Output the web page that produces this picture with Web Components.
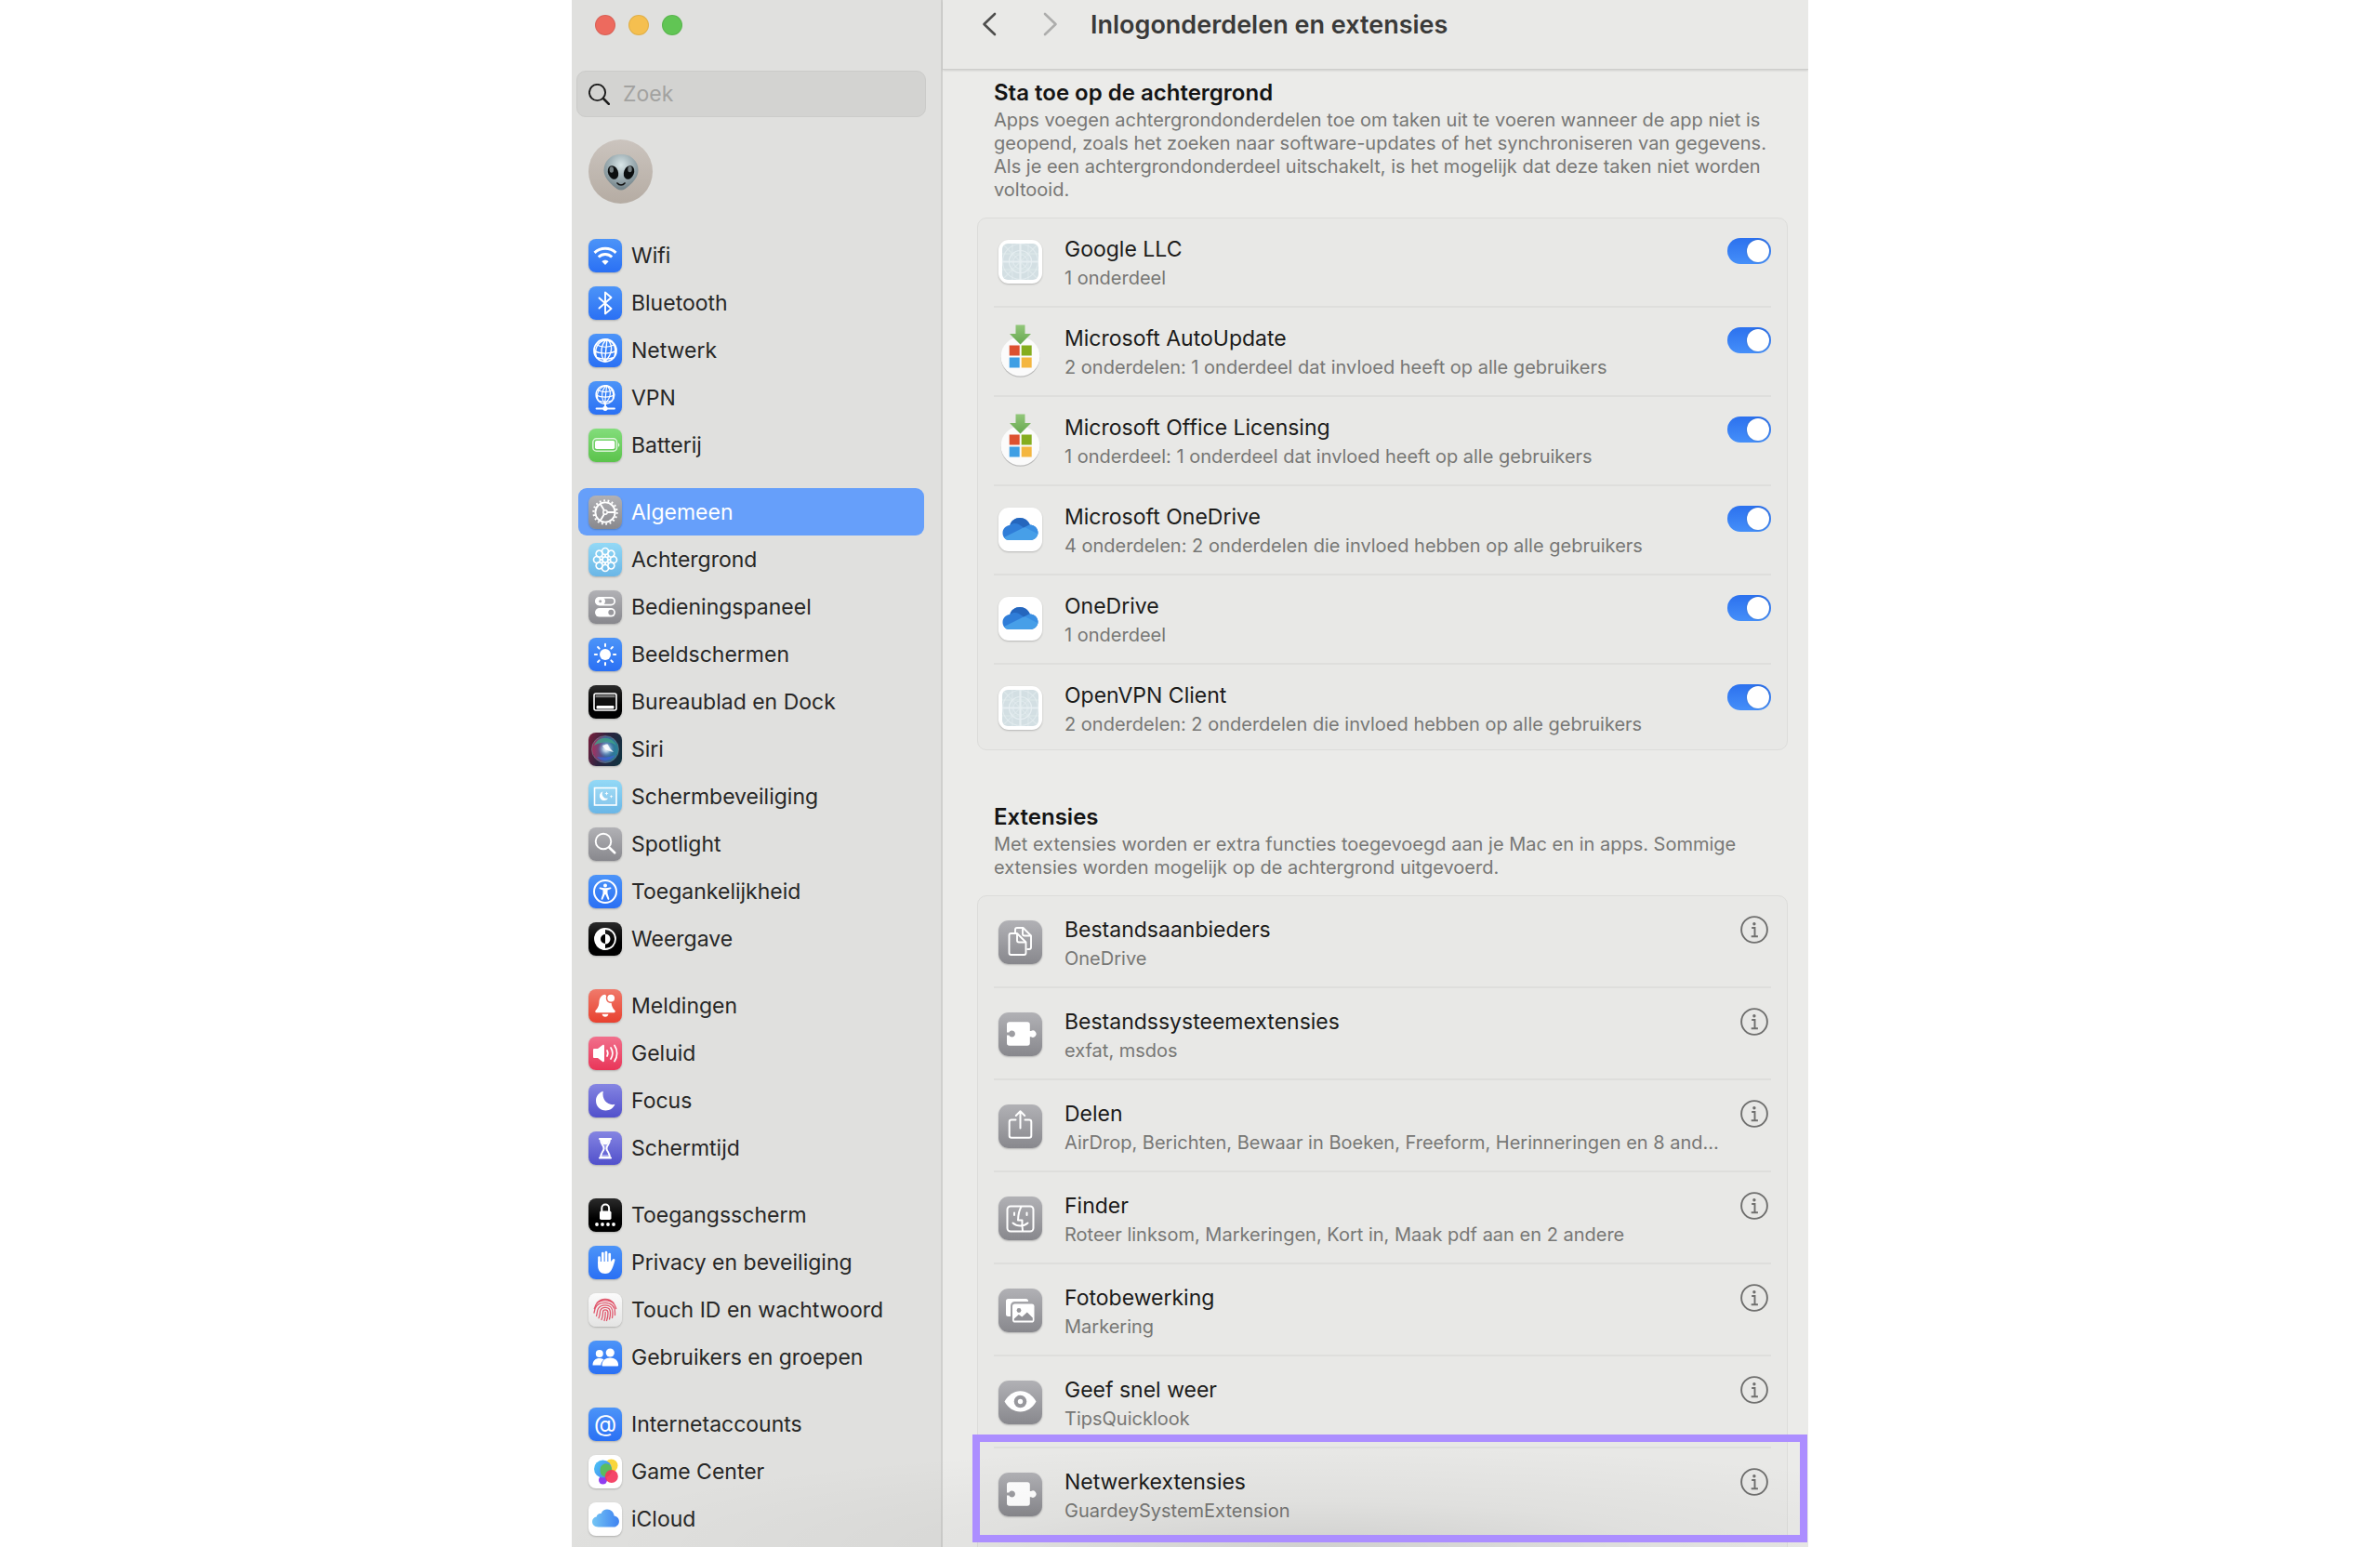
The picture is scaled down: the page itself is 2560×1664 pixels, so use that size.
<!DOCTYPE html>
<html lang="nl">
<head>
<meta charset="utf-8">
<title>Inlogonderdelen en extensies</title>
<style>
  html, body { margin: 0; height: 100%; background: #fff; }
  body { font-family: Inter, "Liberation Sans", sans-serif; color: #272726; -webkit-font-smoothing: antialiased; }
</style>
</head>
<body>
<settings-window>
  <settings-sidebar slot="sidebar">
    <sidebar-group>
      <sidebar-item icon="wifi">Wifi</sidebar-item>
      <sidebar-item icon="bluetooth">Bluetooth</sidebar-item>
      <sidebar-item icon="network">Netwerk</sidebar-item>
      <sidebar-item icon="vpn">VPN</sidebar-item>
      <sidebar-item icon="battery">Batterij</sidebar-item>
    </sidebar-group>
    <sidebar-group>
      <sidebar-item icon="gear" selected>Algemeen</sidebar-item>
      <sidebar-item icon="wallpaper">Achtergrond</sidebar-item>
      <sidebar-item icon="controls">Bedieningspaneel</sidebar-item>
      <sidebar-item icon="displays">Beeldschermen</sidebar-item>
      <sidebar-item icon="dock">Bureaublad en Dock</sidebar-item>
      <sidebar-item icon="siri">Siri</sidebar-item>
      <sidebar-item icon="saver">Schermbeveiliging</sidebar-item>
      <sidebar-item icon="spotlight">Spotlight</sidebar-item>
      <sidebar-item icon="access">Toegankelijkheid</sidebar-item>
      <sidebar-item icon="appearance">Weergave</sidebar-item>
    </sidebar-group>
    <sidebar-group>
      <sidebar-item icon="bell">Meldingen</sidebar-item>
      <sidebar-item icon="sound">Geluid</sidebar-item>
      <sidebar-item icon="focus">Focus</sidebar-item>
      <sidebar-item icon="screentime">Schermtijd</sidebar-item>
    </sidebar-group>
    <sidebar-group>
      <sidebar-item icon="lock">Toegangsscherm</sidebar-item>
      <sidebar-item icon="privacy">Privacy en beveiliging</sidebar-item>
      <sidebar-item icon="touchid">Touch ID en wachtwoord</sidebar-item>
      <sidebar-item icon="users">Gebruikers en groepen</sidebar-item>
    </sidebar-group>
    <sidebar-group>
      <sidebar-item icon="internet">Internetaccounts</sidebar-item>
      <sidebar-item icon="gamecenter">Game Center</sidebar-item>
      <sidebar-item icon="icloud">iCloud</sidebar-item>
    </sidebar-group>
  </settings-sidebar>

  <title-bar slot="titlebar">Inlogonderdelen en extensies</title-bar>

  <settings-section>
    <span slot="title">Sta toe op de achtergrond</span>
    <span slot="text">Apps voegen achtergrondonderdelen toe om taken uit te voeren wanneer de app niet is geopend, zoals het zoeken naar software-updates of het synchroniseren van gegevens. Als je een achtergrondonderdeel uitschakelt, is het mogelijk dat deze taken niet worden voltooid.</span>
    <settings-row icon="generic" kind="toggle" label="Google LLC" detail="1 onderdeel"></settings-row>
    <settings-row icon="msupdate" kind="toggle" label="Microsoft AutoUpdate" detail="2 onderdelen: 1 onderdeel dat invloed heeft op alle gebruikers"></settings-row>
    <settings-row icon="msupdate" kind="toggle" label="Microsoft Office Licensing" detail="1 onderdeel: 1 onderdeel dat invloed heeft op alle gebruikers"></settings-row>
    <settings-row icon="onedrive" kind="toggle" label="Microsoft OneDrive" detail="4 onderdelen: 2 onderdelen die invloed hebben op alle gebruikers"></settings-row>
    <settings-row icon="onedrive" kind="toggle" label="OneDrive" detail="1 onderdeel"></settings-row>
    <settings-row icon="generic" kind="toggle" label="OpenVPN Client" detail="2 onderdelen: 2 onderdelen die invloed hebben op alle gebruikers"></settings-row>
  </settings-section>

  <settings-section>
    <span slot="title">Extensies</span>
    <span slot="text">Met extensies worden er extra functies toegevoegd aan je Mac en in apps. Sommige extensies worden mogelijk op de achtergrond uitgevoerd.</span>
    <settings-row icon="files" kind="info" label="Bestandsaanbieders" detail="OneDrive"></settings-row>
    <settings-row icon="puzzle" kind="info" label="Bestandssysteemextensies" detail="exfat, msdos"></settings-row>
    <settings-row icon="share" kind="info" label="Delen" detail="AirDrop, Berichten, Bewaar in Boeken, Freeform, Herinneringen en 8 and…"></settings-row>
    <settings-row icon="finder" kind="info" label="Finder" detail="Roteer linksom, Markeringen, Kort in, Maak pdf aan en 2 andere"></settings-row>
    <settings-row icon="photos" kind="info" label="Fotobewerking" detail="Markering"></settings-row>
    <settings-row icon="eye" kind="info" label="Geef snel weer" detail="TipsQuicklook"></settings-row>
    <settings-row icon="puzzle" kind="info" label="Netwerkextensies" detail="GuardeySystemExtension" highlighted></settings-row>
  </settings-section>
</settings-window>

<script>
const BLUE = 'linear-gradient(#4c94f8,#2a70f4)';
const GRAY = 'linear-gradient(#b1b1b5,#88888d)';
const SKY = 'linear-gradient(#93d9f6,#6ab6e6)';
const BLACK = 'linear-gradient(#2b2b2b,#000 60%)';
const PURPLE = 'linear-gradient(#8585e2,#5150cb)';
const s = (w, d, extra = '') => `<path d="${d}" fill="none" stroke="#fff" stroke-width="${w}" stroke-linecap="round" stroke-linejoin="round" ${extra}/>`;
const f = (d, c = '#fff') => `<path d="${d}" fill="${c}"/>`;
const around = (n, shape) => Array.from({ length: n }, (_, i) => `<g transform="rotate(${i * 360 / n} 18 18)">${shape}</g>`).join('');

const globe = `<g fill="none" stroke="#fff"><circle cx="18" cy="18" r="12" stroke-width="1.8"/>
  <g stroke-width="1.4"><path d="M20 6C13 11 12 22 17.5 30M20 6c-1 8-1.500 16-2.500 24M20 6c6 5 7 15-2.500 24M20 6C9 8 6 17 8.500 25M20 6c8 3 10 10 8 18"/>
  <path d="M8 11.500c6 3.500 14 3.500 20.500 0M6 18.500c7 3.500 17 3.500 24 0M8.500 25.500c6 2 13 2 19 0"/></g></g>`;

const cloudPath = 'M10.500 26.500C6.500 26.500 4 24 4 20.800c0-2.800 2-4.800 4.600-5.200.4-2.600 2.600-4 5-3.600C15 8.500 17.300 7.500 20 7.500c4.200 0 7.200 3 7.600 7 3.200.4 5.300 2.900 5.300 5.900 0 3.500-2.600 6.100-6.200 6.100z';

const puzzle = `<path d="M9 13A2.800 2.800 0 0 1 11.800 10.200H31a2.800 2.800 0 0 1 2.800 2.800V19.900H35a3.700 3.700 0 1 1 0 6.400H33.800V33a2.800 2.800 0 0 1-2.800 2.800H11.800A2.800 2.800 0 0 1 9 33V24.400h2.300a3.500 3.500 0 1 0 0-3H9z" fill="#fff"/>`;

/* name: [background, svg markup, viewBox size] */
const ICONS = {
  wifi: [BLUE, s(3, 'M6.500 14.800C13 8.800 23 8.800 29.500 14.800', 'style="stroke-linecap:butt"') + s(3, 'M10.800 19.500c4.200-4 10.200-4 14.400 0', 'style="stroke-linecap:butt"') + f('M18 28l-3.600-3.800c1.900-2 5.300-2 7.200 0z')],
  bluetooth: [BLUE, s(1.9, 'M11.500 12.500L24.500 24 18 29.500v-23L24.500 12l-13 11.500')],
  network: [BLUE, globe],
  vpn: [BLUE, `<g transform="translate(3.200 -.2) scale(.82)">${globe}</g>` + s(1.800, 'M8.500 29.500H28M18 25v4') + '<circle cx="18" cy="29.300" r="2.600" fill="#fff"/>'],
  battery: ['linear-gradient(#83dd7b,#5bc34b)', '<rect x="4.800" y="10.800" width="25.700" height="13.400" rx="3.800" fill="none" stroke="#fff" stroke-opacity=".75" stroke-width="1.500"/><rect x="7" y="13" width="21.300" height="9" rx="1.800" fill="#fff"/><path d="M32 15.200c1.800.8 1.800 3.800 0 4.600z" fill="#fff" fill-opacity=".8"/>'],
  gear: [GRAY, '<g fill="none" stroke="#fff"><circle cx="18" cy="18" r="10.600" stroke-width="1.900"/><circle cx="18" cy="18" r="12.600" stroke-width="2.200" stroke-dasharray="1.800 2.598"/><circle cx="18" cy="18" r="2.200" stroke-width="1.500"/><path d="M20.200 18H28.500M16.900 16L12.700 8.900M16.900 20L12.700 27.100" stroke-width="1.900"/></g>'],
  wallpaper: [SKY, around(8, '<circle cx="18" cy="9" r="3.500" fill="none" stroke="#fff" stroke-width="1.700"/><path d="M18 12.500V15" stroke="#fff" stroke-width="1.800"/>') + '<circle cx="18" cy="18" r="3" fill="none" stroke="#fff" stroke-width="1.700"/>'],
  controls: [GRAY, '<rect x="7.800" y="7.800" width="20.400" height="7.800" rx="3.900" fill="none" stroke="#fff" stroke-width="1.700"/><rect x="7.500" y="7.500" width="10.500" height="8.400" rx="4.200" fill="#fff"/><circle cx="12.700" cy="11.700" r="1.500" fill="#a6a6aa"/><rect x="7" y="19" width="22" height="9.600" rx="4.800" fill="#fff"/><circle cx="24.300" cy="23.800" r="3" fill="#98989d"/>'],
  displays: [BLUE, '<circle cx="18" cy="18" r="6" fill="#fff"/>' + around(8, '<path d="M18 9V6.800" stroke="#fff" stroke-width="2" stroke-linecap="round"/>')],
  dock: [BLACK, '<rect x="6" y="9" width="24" height="18" rx="2" fill="none" stroke="#fff" stroke-width="1.600"/><rect x="7.500" y="10.500" width="21" height="3" fill="#777"/><rect x="7.500" y="13.500" width="21" height="8" fill="#111"/><rect x="8.500" y="22" width="19" height="3.500" rx="1" fill="#fff"/>'],
  siri: ['linear-gradient(110deg,#7d1f3c,#2c2340 45%,#0d3440)', '<defs><radialGradient id="sg"><stop offset="0" stop-color="#fff"/><stop offset=".35" stop-color="#cfe6f5" stop-opacity=".8"/><stop offset="1" stop-color="#4b8fd0" stop-opacity="0"/></radialGradient><linearGradient id="sl" x1="0" x2="1"><stop offset="0" stop-color="#d2346a"/><stop offset=".5" stop-color="#4d7fc4"/><stop offset="1" stop-color="#2fb2c8"/></linearGradient></defs><circle cx="18" cy="18" r="14" fill="url(#sl)" opacity=".65"/><path d="M6 14C10 3 25 3 30 14c-6-5-18-4-24 0z" fill="#3fa887" opacity=".75"/><path d="M9 26c5 6 15 5 20-2-7 3-14 3-20 2z" fill="#3b63d6" opacity=".8"/><circle cx="19" cy="17.500" r="9" fill="url(#sg)"/><path d="M15 14c3-1 5-2 6-1 1 3 4 6 6 8-5-1-10-3-12-7z" fill="#fff" opacity=".85"/><circle cx="18" cy="18" r="14.500" fill="none" stroke="#a6c5d0" stroke-width=".8" opacity=".5"/>'],
  saver: [SKY, '<rect x="6.500" y="8.500" width="23.500" height="18.500" fill="#fff" fill-opacity=".15" stroke="#fff" stroke-width="1.600"/>' + f('M15.500 12.300a5 5 0 1 0 5.800 7.200 4.900 4.900 0 0 1-5.800-7.200z') + f('M19.500 12.300l.6 1.600 1.600.6-1.600.6-.6 1.600-.6-1.600-1.600-.6 1.600-.6zM24.500 15.800l.5 1.500 1.500.5-1.500.5-.5 1.500-.5-1.500-1.500-.5 1.500-.5z')],
  spotlight: [GRAY, s(1.9, 'M22.200 21.500l6 5.800', 'style="stroke-width:2.600"') + '<circle cx="16" cy="15" r="8.300" fill="none" stroke="#fff" stroke-width="1.900"/>'],
  access: [BLUE, '<circle cx="18" cy="18" r="12" fill="none" stroke="#fff" stroke-width="2"/><circle cx="18" cy="11.600" r="2" fill="#fff"/>' + f('M11.500 14.300c0-.7.6-1 1.200-.8 3.500 1 7.100 1 10.600 0 .6-.2 1.200.1 1.200.8 0 .5-.3.8-.8 1l-3.200 1.100v3.600l1.800 5.600c.4 1.300-1.200 1.700-1.700.6L18.300 21h-.6l-2.300 5.200c-.5 1.100-2.100.7-1.700-.6l1.800-5.600v-3.600l-3.200-1.100c-.5-.2-.8-.5-.8-1z')],
  appearance: [BLACK, '<circle cx="18" cy="18" r="11" fill="none" stroke="#fff" stroke-width="1.800"/>' + f('M18 6.500a11.500 11.500 0 0 0 0 23z') + f('M18 12.500a5.500 5.500 0 0 1 0 11z') + f('M18 13a5 5 0 0 0 0 10z', '#000')],
  bell: ['linear-gradient(#f07a6b,#e8412f)', f('M18 5.800c-4.500.4-6.300 4-6.600 8.500-.3 4.500-1.700 6.300-3.700 8.500-.8.900-.5 2.400.8 2.400h19c1.300 0 1.600-1.500.8-2.400-2-2.200-3.400-4-3.700-8.500z') + '<circle cx="24.200" cy="9.600" r="5.400" fill="#ee6858"/><circle cx="24.200" cy="9.600" r="3.900" fill="#fff"/>' + f('M14.500 26.800h7c-.5 1.900-1.700 3-3.500 3s-3-1.100-3.500-3z')],
  sound: ['linear-gradient(#f1708c,#e93558)', f('M5 14.300c0-.8.5-1.300 1.300-1.300H10l5.200-3.900c.8-.6 1.800-.2 1.800.8v16.200c0 1-1 1.400-1.800.8L10 23H6.300C5.500 23 5 22.500 5 21.700z') + s(1.7, 'M20 15c1 1.800 1 4.200 0 6M24 12c2.200 3.500 2.200 8.500 0 12M28 9.500c3.500 5 3.500 12 0 17')],
  focus: [PURPLE, f('M15.800 7.800C11.800 9 8 12.800 8 17.900c0 6 4.600 10.500 10.500 10.500 4.500 0 8.300-2.400 10-6.700-6.500 2.200-14.800-4-12.700-13.900z')],
  screentime: [PURPLE, s(2.2, 'M12 8h12M12 28.500h12') + '<path d="M13 8.500c0 5 3.500 6.500 3.500 9.700S13 23 13 28h10c0-5-3.500-6.600-3.500-9.800S23 13.500 23 8.500z" fill="#a3a3ec" stroke="#fff" stroke-width="1.900"/>' + f('M14 9h8c0 3-1.500 4-2 5h-4c-.5-1-2-2-2-5z') + f('M18 18.500c.3 2.500 2.800 4 3.200 6.500h-6.400c.4-2.500 2.900-4 3.200-6.500z', '#6a69d6')],
  lock: [BLACK, '<rect x="12" y="13.500" width="12.500" height="9.500" rx="1.800" fill="#fff"/>' + s(2, 'M14.300 14v-3.500a3.900 3.900 0 0 1 7.800 0V14') + [9, 15, 21, 27].map(x => `<circle cx="${x}" cy="28" r="1.900" fill="#fff"/>`).join('')],
  privacy: [BLUE, s(2.7, 'M11.500 12.500V19M15.300 8v10M19 7v10M22.700 9v10') + f('M10.100 17h14l1.800-2.300c.8-1.500 3-.7 2.500 1-1.200 4.500-2.300 8-4 10.700-1.500 2.300-3.500 3.600-6.400 3.600-4.900 0-7.900-3.500-7.900-8.500z')],
  touchid: ['linear-gradient(#fbfbfb,#e4e4e3)', '<g fill="none" stroke="#e0566b" stroke-width="1.300" stroke-linecap="round"><path d="M9 10.500c5-5.500 13-5.500 18 0M6.300 16.500C7.500 10 12 7.800 18 7.800s10.500 3 11.700 8.700M6 21c.5-2 .8-3.500 1.300-5C8.800 12 13 10.300 18 10.300c6 0 10.500 3.700 10.500 10.200v3M8.500 24.500c1-3 .5-5.500 2-8 1.500-2.500 4-3.700 7.500-3.700 4.800 0 8 3.200 8 8 0 2.500 0 4-.5 5.700M11 26.700c2-4 .7-6 2-8.700.8-1.700 2.500-2.700 5-2.700 3.500 0 5.500 2.200 5.500 5.700 0 2.700-.3 4.800-1 7M14 28.500c1.500-3 1.500-6 1.500-8 0-1.700 1-2.700 2.500-2.700 2 0 3 1.300 3 3.200 0 3-.5 6-1.500 8.500M18.200 20.500c0 3 0 6-1.200 9"/></g>'],
  users: [BLUE, '<circle cx="11.800" cy="14" r="4" fill="#fff"/>' + f('M4.500 26.500c0-5 3-7.500 7.300-7.500 2 0 3.500.5 4.700 1.500-2 1.800-3 3.500-3.200 6z') + '<circle cx="23.300" cy="13" r="4.600" fill="#fff"/>' + f('M14.500 26.500c0-5.300 3.800-8 8.800-8s8.800 2.700 8.800 8c0 .6-.4.900-1 .9H15.500c-.6 0-1-.3-1-.9z')],
  internet: [BLUE, '<text x="18" y="26" text-anchor="middle" font-family="Inter, sans-serif" font-size="25" fill="#fff">@</text>'],
  gamecenter: ['#fff', '<defs><linearGradient id="ga" x1="0" x2="1" y2=".6"><stop offset="0" stop-color="#49c8f5"/><stop offset="1" stop-color="#4a86f0"/></linearGradient></defs><circle cx="15.500" cy="27" r="4.500" fill="#8f3df0"/><circle cx="24.500" cy="11.500" r="7" fill="#f9d63c"/><circle cx="15.500" cy="15" r="9.500" fill="url(#ga)"/><path d="M17.800 9.300a7 7 0 0 1 7.200 9.100c-1 2.500-3.500 5-6 5.500a7.500 7.500 0 0 1-1.200-14.600z" fill="#5cc04f" opacity=".9"/><circle cx="24.800" cy="23" r="7" fill="#f4365c" opacity=".92"/>'],
  icloud: ['#fff', '<defs><linearGradient id="ic" x1="0" x2="1"><stop offset="0" stop-color="#74c5f4"/><stop offset="1" stop-color="#3f83f2"/></linearGradient></defs><path d="' + cloudPath + '" fill="url(#ic)"/>'],

  generic: ['#fff', '<rect x="4" y="4" width="39" height="39" rx="6" fill="#d3dfe3"/><g fill="none" stroke="#e6eef1" stroke-width="1.200"><path d="M23.500 4v39M4 23.500h39" stroke-width="2.200"/><path d="M15 4v39M32 4v39M4 15h39M4 32h39M6 6l35 35M41 6L6 41" opacity=".55"/><circle cx="23.500" cy="23.500" r="19" opacity=".7"/><circle cx="23.500" cy="23.500" r="12"/><circle cx="23.500" cy="23.500" r="7.500" opacity=".7"/></g>', 47],
  msupdate: ['none', '<defs><linearGradient id="mg" x2="0" y2="1"><stop offset="0" stop-color="#92c77a"/><stop offset="1" stop-color="#67a84f"/></linearGradient></defs><circle cx="23.500" cy="30.800" r="21" fill="#bcbcbb"/><circle cx="23.500" cy="29.500" r="21" fill="#fbfbfb"/><path d="M11.700 17.500h11v11h-11z" fill="#dd5130"/><path d="M24.700 17.500h11v11h-11z" fill="#85ad1f"/><path d="M11.700 30.500h11v11h-11z" fill="#3f9fe4"/><path d="M24.700 30.500h11v11h-11z" fill="#f4b63f"/><path d="M18.500-4.500h10v9.500H35L23.500 16.500 12 5h6.500z" fill="url(#mg)"/>', 47],
  onedrive: ['#fff', '<defs><clipPath id="oc"><path d="M11.500 35C7.500 35 4.500 31.500 4.500 27.500 4.500 23 7.500 19.500 12 19 13.500 14 18 11 23 11c5 0 9.300 3 10.800 7.500 5 .2 8.700 3.800 8.700 8.300S39 35 34.500 35z"/></clipPath></defs><g clip-path="url(#oc)"><path d="M0 0h47v47H0z" fill="#2f7dd8"/><path d="M25 23l9-6 12 2v8l-8 4z" fill="#3a8fe2"/><path d="M4 33l24-12 16 8v8H4z" fill="#479fe8"/><path d="M13 18.500c5-3 9-1 14 3l7-3.500-3-8H14z" fill="#2566bd"/></g>', 47],
  files: [GRAY, '<g fill="none" stroke="#fff" stroke-width="1.900" stroke-linejoin="round"><path d="M18 13V10a2 2 0 0 1 2-2h6.500l8.500 8.500v12.500a2 2 0 0 1-2 2h-2.500"/><path d="M26 8v6.500a2 2 0 0 0 2 2h7"/><path d="M13.500 14H20L29.500 23.500v11.500a2 2 0 0 1-2 2H13.500a2 2 0 0 1-2-2v-19a2 2 0 0 1 2-2z"/><path d="M20 14v7.500a2 2 0 0 0 2 2h7.500"/></g>', 47],
  puzzle: [GRAY, puzzle, 47],
  share: [GRAY, s(2, 'M18.500 16.500H14a2.300 2.300 0 0 0-2.300 2.300V33.500A2.300 2.300 0 0 0 14 35.800h19a2.300 2.300 0 0 0 2.300-2.300V18.800a2.300 2.300 0 0 0-2.300-2.300h-4.500M23.500 25.500V7.500M18.800 12l4.700-4.700L28.200 12'), 47],
  finder: [GRAY, s(2, 'M13 10.500h21a3.500 3.500 0 0 1 3.500 3.500v20a3.500 3.500 0 0 1-3.500 3.500H13A3.500 3.500 0 0 1 9.500 34V14a3.500 3.500 0 0 1 3.500-3.500zM24.500 11c-2.500 4-3.300 9-3.500 14.500h4.500c-.2 4 0 8 .5 11.500M15.500 28.500c4.500 4 11.500 4 16 0M17 17.500v2.500M30.500 17.500v2.500'), 47],
  photos: [GRAY, f('M10.500 11h19a2.500 2.500 0 0 1 2.500 2.500V14H17.500a4.500 4.500 0 0 0-4.500 4.500V30H10.500A2.500 2.500 0 0 1 8 27.500v-14A2.500 2.500 0 0 1 10.500 11z') + '<rect x="15" y="16.500" width="23.500" height="20" rx="2.800" fill="#fff"/><circle cx="22" cy="23.500" r="2.400" fill="#97979b"/><path d="M16.800 34.500V32.500l5-4.500 3.500 2.500 5.500-5 6 6v3z" fill="#929297"/>', 47],
  eye: [GRAY, f('M6.500 22.500c4-7 10-11.300 17-11.300s13 4.300 17 11.300c-4 7-10 11-17 11s-13-4-17-11z') + '<circle cx="23.500" cy="22.500" r="6.800" fill="#98989d"/><circle cx="23.500" cy="22.500" r="2.700" fill="#fff"/>', 47]
};

class BaseElement extends HTMLElement {
  constructor() {
    super();
    this.attachShadow({ mode: 'open' });
  }
  connectedCallback() {
    this.shadowRoot.innerHTML = `<style>*{box-sizing:border-box}${this.styles()}</style>${this.markup()}`;
  }
}

customElements.define('app-icon', class extends BaseElement {
  styles() {
    const [bg, , size = 36] = ICONS[this.getAttribute('name')];
    const shadow = bg === 'none' ? 'none' : '0 1px 2px rgba(0,0,0,.22)';
    return `:host{display:block;flex:none;width:${size}px;height:${size}px;border-radius:${size > 40 ? 11 : 8}px;background:${bg};box-shadow:${shadow}}
      svg{display:block;overflow:visible;width:100%;height:100%}`;
  }
  markup() {
    const [, art, size = 36] = ICONS[this.getAttribute('name')];
    return `<svg viewBox="0 0 ${size} ${size}" aria-hidden="true">${art}</svg>`;
  }
});

customElements.define('sidebar-item', class extends BaseElement {
  styles() {
    return `:host{display:block}
      a{display:flex;align-items:center;gap:10px;height:51px;padding:0 11px;border-radius:9px;color:inherit;text-decoration:none;font-size:23px;line-height:30px;white-space:nowrap}
      :host([selected]) a{background:#669ffa;color:#fff}`;
  }
  markup() {
    return `<a href="#" ${this.hasAttribute('selected') ? 'aria-current="page"' : ''}><app-icon name="${this.getAttribute('icon')}"></app-icon><slot></slot></a>`;
  }
});

customElements.define('sidebar-group', class extends BaseElement {
  styles() { return ':host{display:flex;flex-direction:column}'; }
  markup() { return '<slot></slot>'; }
});

customElements.define('user-avatar', class extends BaseElement {
  styles() {
    return `:host{display:block}
      button{display:flex;align-items:center;justify-content:center;width:69px;height:69px;padding:0;border:0;border-radius:50%;background:linear-gradient(#cbc4be,#b5aca3)}
      svg{width:40px;height:40px}`;
  }
  markup() {
    return `<button type="button" aria-label="Account"><svg viewBox="0 0 40 40"><defs><radialGradient id="al" cx=".5" cy=".3" r=".65"><stop offset="0" stop-color="#d9e6e8"/><stop offset=".5" stop-color="#a3b3b8"/><stop offset="1" stop-color="#76868c"/></radialGradient></defs>
      <path d="M20 1C9 1 1.500 8.500 1.500 18c0 6.500 4.500 12 9.500 16.500C14.500 37.500 17 39.500 20 39.500s5.500-2 9-5C34 30 38.500 24.500 38.500 18 38.500 8.500 31 1 20 1z" fill="url(#al)"/>
      <ellipse cx="11.500" cy="20.500" rx="5.400" ry="7.600" transform="rotate(-22 11.500 20.500)" fill="#0c0f10"/><ellipse cx="28.500" cy="20.500" rx="5.400" ry="7.600" transform="rotate(22 28.500 20.500)" fill="#0c0f10"/>
      <ellipse cx="9.800" cy="17.500" rx="2.200" ry="3.200" fill="#8f9a9d" opacity=".8"/><ellipse cx="29.500" cy="17" rx="2.200" ry="3.200" fill="#8f9a9d" opacity=".8"/>
      <path d="M16 32c2 2.600 6 2.600 8 0" fill="none" stroke="#111" stroke-width="1.600" stroke-linecap="round"/></svg></button>`;
  }
});

customElements.define('search-box', class extends BaseElement {
  styles() {
    return `:host{display:block}
      label{display:flex;align-items:center;gap:14px;height:50px;padding:0 12px;border-radius:10px;background:#d3d3d1;border:1px solid #cbcbc9}
      svg{flex:none;width:23px;height:23px}
      input{flex:1;min-width:0;padding:0;border:0;outline:0;background:none;font:inherit;font-size:23px;line-height:30px;color:#222}
      input::placeholder{color:#a2a2a0;opacity:1}`;
  }
  markup() {
    return `<label><svg viewBox="0 0 23 23" aria-hidden="true" fill="none" stroke="#1c1c1c" stroke-linecap="round"><circle cx="9.500" cy="9.500" r="8.600" stroke-width="1.900"/><path d="M16 16l5.800 5.800" stroke-width="2.600"/></svg><input type="text" placeholder="Zoek" aria-label="Zoek"></label>`;
  }
});

customElements.define('window-controls', class extends BaseElement {
  styles() {
    return `:host{display:flex;gap:14px}
      button{width:22px;height:22px;padding:0;border:1px solid rgba(0,0,0,.08);border-radius:50%}
      .c{background:#ed6a5e}.m{background:#f5bf4f}.z{background:#61c554}`;
  }
  markup() {
    return '<button class="c" type="button" aria-label="Sluit"></button><button class="m" type="button" aria-label="Minimaliseer"></button><button class="z" type="button" aria-label="Vergroot"></button>';
  }
});

customElements.define('settings-sidebar', class extends BaseElement {
  styles() {
    return `:host{display:flex;flex-direction:column;height:100%;overflow:hidden;background:#e0e0de}
      window-controls{padding:16px 25px 38px}
      search-box{margin:0 16px 0 5px}
      user-avatar{padding:24px 18px 30px}
      nav{display:flex;flex-direction:column;gap:21px;padding:0 18px 0 7px}`;
  }
  markup() {
    return '<window-controls></window-controls><search-box></search-box><user-avatar></user-avatar><nav aria-label="Instellingen"><slot></slot></nav>';
  }
});

customElements.define('title-bar', class extends BaseElement {
  styles() {
    return `:host{display:block}
      header{display:flex;align-items:flex-start;height:75px;padding:11px 36px 0 40px;background:#e9e9e7;border-bottom:1px solid #cdcdcb;box-shadow:0 1px 2px rgba(0,0,0,.12)}
      button{display:flex;align-items:center;justify-content:center;width:20px;height:30px;padding:0;border:0;background:none;color:#4e4e4d}
      button+button{margin-left:46px;color:#adadac}
      svg{width:16px;height:26px}
      h1{margin:0 0 0 33px;font-size:27px;line-height:32px;font-weight:600;color:#3a3a39;white-space:nowrap}`;
  }
  markup() {
    const chevron = d => `<svg viewBox="0 0 16 26" fill="none" stroke="currentColor" stroke-width="2.600" stroke-linecap="round" stroke-linejoin="round"><path d="${d}"/></svg>`;
    return `<header><button type="button" aria-label="Vorige">${chevron('M14 2L2.500 13 14 24')}</button><button type="button" aria-label="Volgende" disabled>${chevron('M2 2l11.500 11L2 24')}</button><h1><slot></slot></h1></header>`;
  }
});

customElements.define('toggle-switch', class extends BaseElement {
  styles() {
    return `:host{display:block;flex:none}
      input{appearance:none;display:flex;justify-content:flex-end;align-items:center;width:47px;height:28px;margin:0;padding:0 2px;border-radius:14px;background:linear-gradient(#2c71ee,#458ff9)}
      input::before{content:"";width:24px;height:24px;border-radius:50%;background:#fff;box-shadow:0 0 2px rgba(0,0,0,.25)}
      input:not(:checked){justify-content:flex-start;background:#c8c8c6}`;
  }
  markup() { return `<input type="checkbox" role="switch" checked aria-label="${this.getAttribute('label')}">`; }
});

customElements.define('info-button', class extends BaseElement {
  styles() {
    return `:host{display:block;flex:none}
      button{display:block;width:30px;height:30px;padding:0;border:0;background:none;color:#6f6f6e}
      svg{display:block;width:30px;height:30px}`;
  }
  markup() {
    return `<button type="button" aria-label="Info over ${this.getAttribute('label')}"><svg viewBox="0 0 30 30" fill="none" stroke="currentColor"><circle cx="15" cy="15" r="13.900" stroke-width="1.900"/><circle cx="14.900" cy="8.800" r="1.700" fill="currentColor" stroke="none"/><path d="M12.200 13h3.300v9M11.700 22.200h7.200" stroke-width="1.900"/></svg></button>`;
  }
});

customElements.define('settings-row', class extends BaseElement {
  styles() {
    return `:host{display:block;position:relative}
      .row{display:flex;align-items:flex-start;min-height:94px;padding:18px 0 0 5px}
      :host(:nth-of-type(n+2)) .row{min-height:96px;border-top:2px solid #dededc}
      :host([kind=toggle]:last-of-type) .row{min-height:93px}
      :host([kind=info]) .row{min-height:97px;padding-top:21px}
      :host([kind=info]:nth-of-type(n+2)) .row{min-height:99px}
      app-icon{margin-top:5px}
      .text{flex:1;min-width:0;margin-left:24px;white-space:nowrap}
      .text div{overflow:hidden;text-overflow:ellipsis}
      .label{font-size:23px;line-height:30px;color:#1b1b1a}
      .detail{font-size:20px;line-height:32px;color:#777775}
      toggle-switch{margin-top:3px}
      info-button{margin-right:3px}
      .ring{position:absolute;inset:-13px -39px auto -23px;height:116px;border:8px solid #ac8eff;z-index:2;pointer-events:none}`;
  }
  markup() {
    const a = n => this.getAttribute(n);
    const control = a('kind') === 'toggle' ? 'toggle-switch' : 'info-button';
    return `<div class="row"><app-icon name="${a('icon')}"></app-icon><div class="text"><div class="label">${a('label')}</div><div class="detail">${a('detail')}</div></div><${control} label="${a('label')}"></${control}></div>${this.hasAttribute('highlighted') ? '<div class="ring"></div>' : ''}`;
  }
});

customElements.define('settings-section', class extends BaseElement {
  styles() {
    return `:host{display:block}
      h2{margin:0 18px 2px;font-size:24px;line-height:30px;font-weight:600;color:#141414}
      p{margin:0 18px 17px;font-size:20px;line-height:25px;color:#777775}
      .card{padding:0 17px;border:1px solid #dcdcda;border-radius:10px;background:#e8e8e6}
      :host(:last-of-type) .card{padding-bottom:20px}`;
  }
  markup() {
    return '<h2><slot name="title"></slot></h2><p><slot name="text"></slot></p><div class="card"><slot></slot></div>';
  }
});

customElements.define('settings-window', class extends BaseElement {
  styles() {
    return `:host{display:grid;grid-template-columns:minmax(0,3fr) minmax(0,7fr);position:relative;width:100%;max-width:1330px;height:100vh;margin:0 auto;overflow:hidden;background:#ebebe9}
      aside{min-height:0;border-right:2px solid #cfcfcd;overflow:hidden}
      main{display:flex;flex-direction:column;min-width:0;min-height:0}
      .scroll{flex:1;min-height:0;display:flex;flex-direction:column;gap:57px;padding:10px 22px 0 37px;overflow:hidden auto;scrollbar-width:none}
      .shade{position:absolute;inset:auto 0 0 0;height:110px;pointer-events:none;background:radial-gradient(ellipse 62% 100% at 60% 100%,rgba(0,0,0,.1),rgba(0,0,0,.035) 45%,transparent)}`;
  }
  markup() {
    return '<aside><slot name="sidebar"></slot></aside><main><slot name="titlebar"></slot><div class="scroll"><slot></slot></div></main><div class="shade"></div>';
  }
});
</script>
</body>
</html>
